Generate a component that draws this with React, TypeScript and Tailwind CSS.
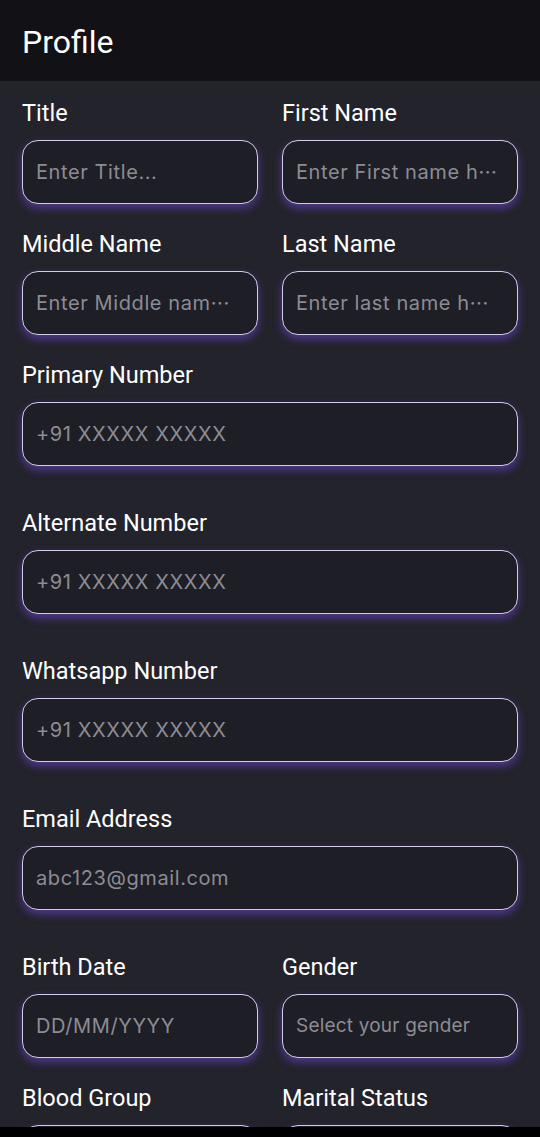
import React from "react";

type F = { label: string; ph: string; small?: boolean };

const Field = ({ label, ph, small }: F) => (
  <div className="flex flex-col min-w-0">
    <div
      className="text-[23.5px] leading-[26px] text-white mb-[14px] whitespace-nowrap"
      style={{ fontFamily: "Roboto, 'Liberation Sans', sans-serif" }}
    >
      {label}
    </div>
    <div className="h-[64px] rounded-[16px] border-[1.5px] border-[#d3cbea] bg-[#1e1e26] shadow-[0_4px_9px_rgba(120,72,230,0.55)] flex items-center px-[13px] overflow-hidden">
      <input
        readOnly
        placeholder={ph}
        className={`w-full bg-transparent outline-none text-white placeholder:text-[#8c8c93] ${
          small ? "text-[19px] tracking-[0.2px]" : "text-[20px] tracking-[0.6px]"
        }`}
        style={{ fontFamily: "Inter, 'Noto Sans', sans-serif" }}
      />
    </div>
  </div>
);

export default function App() {
  return (
    <div className="w-[540px] h-[1137px] flex flex-col overflow-hidden bg-[#23232b]">
      <div className="h-[81px] shrink-0 bg-[#111116] flex items-center px-[22px] pt-[2px]">
        <span
          className="text-[32px] text-white"
          style={{ fontFamily: "Roboto, 'Liberation Sans', sans-serif" }}
        >
          Profile
        </span>
      </div>
      <div className="flex-1 overflow-hidden px-[22px] pt-[19px] flex flex-col gap-[27px]">
        <div className="grid grid-cols-2 gap-x-[24px]">
          <Field label="Title" ph="Enter Title..." />
          <Field label="First Name" ph="Enter First name h···" />
        </div>
        <div className="grid grid-cols-2 gap-x-[24px]">
          <Field label="Middle Name" ph="Enter Middle nam···" />
          <Field label="Last Name" ph="Enter last name h···" />
        </div>
        <div className="flex flex-col gap-[44px]">
          <Field label="Primary Number" ph="+91 XXXXX XXXXX" />
          <Field label="Alternate Number" ph="+91 XXXXX XXXXX" />
          <Field label="Whatsapp Number" ph="+91 XXXXX XXXXX" />
          <Field label="Email Address" ph="abc123@gmail.com" />
        </div>
        <div className="grid grid-cols-2 gap-x-[24px] mt-[17px]">
          <Field label="Birth Date" ph="DD/MM/YYYY" />
          <Field label="Gender" ph="Select your gender" small />
        </div>
        <div className="grid grid-cols-2 gap-x-[24px]">
          <Field label="Blood Group" ph="" />
          <Field label="Marital Status" ph="" />
        </div>
      </div>
      <div className="h-[10px] shrink-0 bg-black" />
    </div>
  );
}
